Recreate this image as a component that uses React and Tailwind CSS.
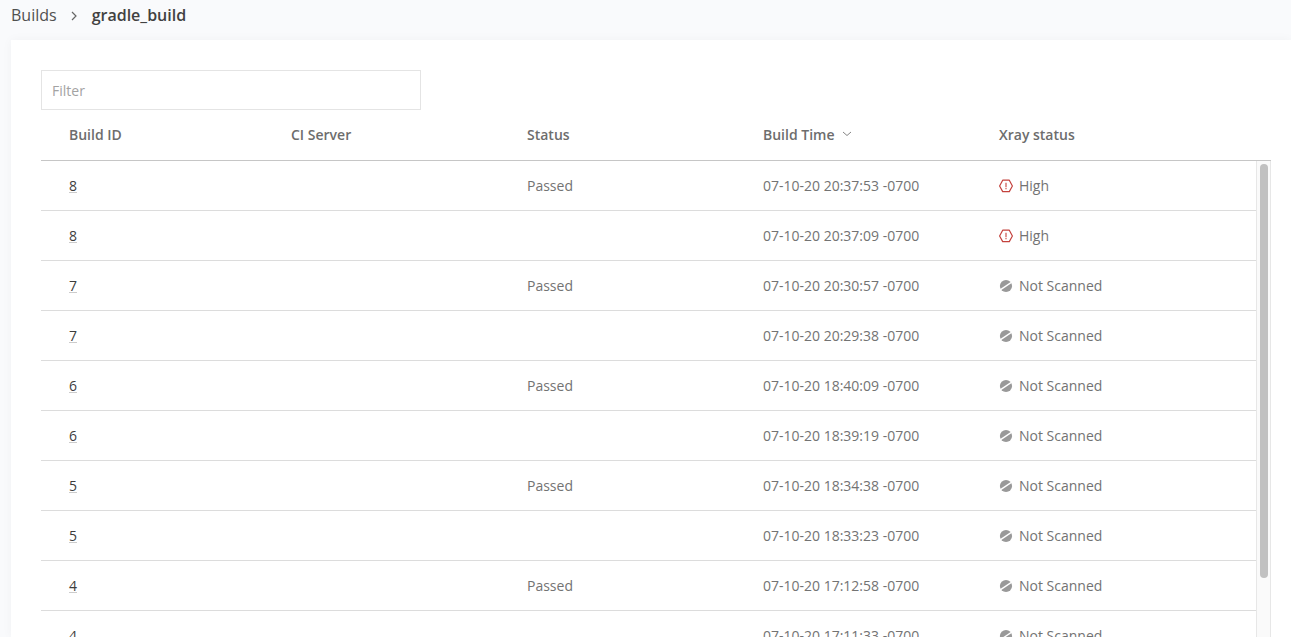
const builds = [
  { id: 8, status: 'Passed', time: '07-10-20 20:37:53 -0700', xray: 'High' },
  { id: 8, status: '', time: '07-10-20 20:37:09 -0700', xray: 'High' },
  { id: 7, status: 'Passed', time: '07-10-20 20:30:57 -0700', xray: 'Not Scanned' },
  { id: 7, status: '', time: '07-10-20 20:29:38 -0700', xray: 'Not Scanned' },
  { id: 6, status: 'Passed', time: '07-10-20 18:40:09 -0700', xray: 'Not Scanned' },
  { id: 6, status: '', time: '07-10-20 18:39:19 -0700', xray: 'Not Scanned' },
  { id: 5, status: 'Passed', time: '07-10-20 18:34:38 -0700', xray: 'Not Scanned' },
  { id: 5, status: '', time: '07-10-20 18:33:23 -0700', xray: 'Not Scanned' },
  { id: 4, status: 'Passed', time: '07-10-20 17:12:58 -0700', xray: 'Not Scanned' },
  { id: 4, status: '', time: '07-10-20 17:11:33 -0700', xray: 'Not Scanned' },
];

const columns = 'grid grid-cols-[222px_236px_236px_236px_1fr] items-center pl-7';

function HighIcon() {
  return (
    <svg className="h-3.5 w-3.5 shrink-0" viewBox="0 0 14 14" fill="none" stroke="#c4423d">
      <path d="M3.7 1.2h6.6L13.4 7l-3.1 5.6H3.7L.6 7z" strokeWidth="1.2" strokeLinejoin="round" />
      <path d="M7 3.8v4.4M7 9v1.3" stroke="#d0605b" strokeWidth="1.3" />
    </svg>
  );
}

function NotScannedIcon() {
  return (
    <svg className="h-3.5 w-3.5 shrink-0" viewBox="0 0 14 14">
      <circle cx="7" cy="7" r="6.1" fill="#999" />
      <path d="M1.6 10.6 12.4 3.4" stroke="#fff" strokeWidth="1.3" />
    </svg>
  );
}

function BuildRow({ build }) {
  return (
    <div className={`${columns} h-[50px] shrink-0 border-b border-[#dcdcdc]`}>
      <div className="flex">
        <a className="h-[15px] border-b border-[#cccccc] leading-[15px] text-[#3d3d3d]">{build.id}</a>
      </div>
      <div />
      <div>{build.status}</div>
      <div>{build.time}</div>
      <div className="flex items-center gap-1.5">
        {build.xray === 'High' ? <HighIcon /> : <NotScannedIcon />}
        <span>{build.xray}</span>
      </div>
    </div>
  );
}

export default function App() {
  return (
    <div className="flex h-screen flex-col overflow-hidden bg-[#f9fafc] font-['Open_Sans',sans-serif] text-sm text-[#737373] antialiased">
      <nav className="flex h-10 shrink-0 items-start pt-[3px] pl-[11px] text-base leading-6 text-[#505050]">
        <span>Builds</span>
        <svg className="mt-[8px] mr-[14px] ml-[13px] h-[10px] w-2" viewBox="0 0 8 10" fill="none" stroke="#666" strokeWidth="1.2">
          <path d="M2 1l4 4-4 4" />
        </svg>
        <span className="font-semibold text-[#414141]">gradle_build</span>
      </nav>
      <main className="ml-[11px] flex min-h-0 flex-1 flex-col bg-white pt-[30px] pr-5 pl-[30px] shadow-[0_0_10px_rgba(0,0,0,0.04)]">
        <input
          className="h-10 w-[380px] shrink-0 border border-[#e4e4e4] px-2.5 text-sm outline-none placeholder:text-[#a3a3a3]"
          placeholder="Filter"
        />
        <div className={`${columns} h-[51px] shrink-0 border-b border-[#c6c6c6] font-semibold text-[#6d6d6d]`}>
          <div>Build ID</div>
          <div>CI Server</div>
          <div>Status</div>
          <div className="flex items-center gap-[7px]">
            Build Time
            <svg className="mb-0.5 h-[6px] w-[10px]" viewBox="0 0 10 6" fill="none" stroke="#858585">
              <path d="M1 1l4 3.5L9 1" />
            </svg>
          </div>
          <div>Xray status</div>
        </div>
        <div className="flex min-h-0 flex-1">
          <div className="flex min-w-0 flex-1 flex-col overflow-hidden">
            {builds.map((build) => (
              <BuildRow key={build.time} build={build} />
            ))}
          </div>
          <div className="flex w-[15px] justify-center border-x border-[#e7e7e7] bg-[#fafafa] pt-[3px]">
            <div className="h-[414px] w-2 rounded-full bg-[#c1c1c1]" />
          </div>
        </div>
      </main>
    </div>
  );
}
